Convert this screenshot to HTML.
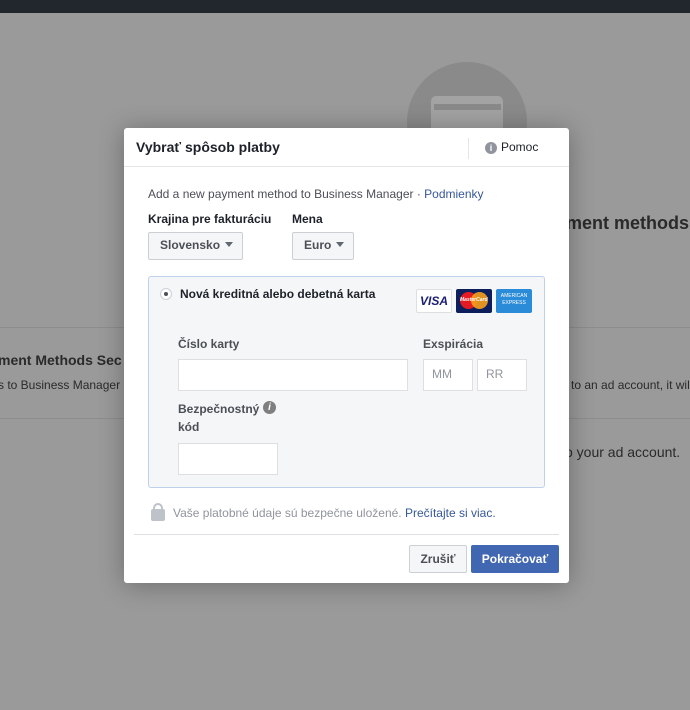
<!DOCTYPE html>
<html><head><meta charset="utf-8"><style>
*{box-sizing:border-box;margin:0;padding:0}
body{width:690px;height:710px;background:#9a9a9a;font-family:"Liberation Sans",Arial,sans-serif;position:relative;overflow:hidden;color:#1d2129}
.a{position:absolute;white-space:nowrap}
.bg{color:#2a2a2a}
.sel{position:absolute;background:#f5f6f7;border:1px solid #ccd0d5;border-radius:2px;font-weight:bold;font-size:12px;color:#4b4f56;line-height:25px;padding-left:11px}
.tri{display:inline-block;width:0;height:0;border-left:4.5px solid transparent;border-right:4.5px solid transparent;border-top:5px solid #606770;margin-left:5px;vertical-align:2px}
.inp{position:absolute;background:#fff;border:1px solid #dddfe2;font-size:12px;color:#90949c;line-height:29px;padding-left:8px}
.lbl{font-weight:bold;font-size:12px;color:#4b4f56}
</style></head><body>
<div class="a" style="left:0;top:0;width:690px;height:13px;background:#22272e"></div>
<div class="a" style="left:407px;top:62px;width:120px;height:120px;border-radius:50%;background:#8a8a8a"></div>
<div class="a" style="left:431px;top:96px;width:72px;height:40px;border-radius:5px;background:#a3a3a3"></div>
<div class="a" style="left:434px;top:104px;width:67px;height:6px;background:#8a8a8a"></div>
<div class="a bg" style="left:566px;top:213px;font-size:18px;font-weight:bold">ment methods</div>
<div class="a" style="left:0;top:327px;width:690px;height:1px;background:#8d8d8d"></div>
<div class="a" style="left:0;top:418px;width:690px;height:1px;background:#8d8d8d"></div>
<div class="a bg" style="left:-2px;top:352px;font-size:14px;font-weight:bold">ment Methods Sec</div>
<div class="a bg" style="left:-2px;top:378px;font-size:12px">s to Business Manager</div>
<div class="a bg" style="left:571px;top:378px;font-size:12px">to an ad account, it wil</div>
<div class="a bg" style="left:565px;top:444px;font-size:14px">o your ad account.</div>

<div class="a" style="left:124px;top:128px;width:445px;height:455px;background:#fff;border-radius:3px;box-shadow:0 2px 26px rgba(0,0,0,.3)"></div>
<div class="a" style="left:124px;top:166px;width:445px;height:1px;background:#e5e5e5"></div>
<div class="a" style="left:136px;top:139px;font-size:14px;font-weight:bold;color:#1d2129">Vybrať spôsob platby</div>
<div class="a" style="left:468px;top:138px;width:1px;height:21px;background:#e5e5e5"></div>
<div class="a" style="left:485px;top:142px;width:12px;height:12px;border-radius:50%;background:#90949c;color:#fff;font-size:9px;font-weight:bold;text-align:center;line-height:12px">i</div>
<div class="a" style="left:501px;top:140px;font-size:12px;color:#1d2129">Pomoc</div>

<div class="a" style="left:148px;top:187px;font-size:12px;color:#4b4f56">Add a new payment method to Business Manager · <span style="color:#365899">Podmienky</span></div>
<div class="a lbl" style="left:148px;top:212px;color:#1d2129">Krajina pre fakturáciu</div>
<div class="a lbl" style="left:292px;top:212px;color:#1d2129">Mena</div>
<div class="sel" style="left:148px;top:232px;width:95px;height:28px">Slovensko<span class="tri"></span></div>
<div class="sel" style="left:292px;top:232px;width:62px;height:28px">Euro<span class="tri"></span></div>

<div class="a" style="left:148px;top:276px;width:397px;height:212px;background:#f5f6f7;border:1px solid #bfd0ec;border-radius:3px"></div>
<div class="a" style="left:160px;top:288px;width:12px;height:12px;border-radius:50%;border:1px solid #ccd0d5;background:#fff"></div>
<div class="a" style="left:164px;top:292px;width:4px;height:4px;border-radius:50%;background:#4b4f56"></div>
<div class="a lbl" style="left:180px;top:287px;color:#1d2129">Nová kreditná alebo debetná karta</div>
<div class="a" style="left:416px;top:289px;width:36px;height:24px;background:#fff;border:1px solid #dddfe2;border-radius:2px;color:#1a1f71;font-weight:bold;font-style:italic;font-size:12px;text-align:center;line-height:22px">VISA</div>
<div class="a" style="left:456px;top:289px;width:36px;height:24px;background:#0a1f5c;border-radius:2px"></div>
<div class="a" style="left:460px;top:292px;width:17px;height:17px;border-radius:50%;background:#e31b23"></div>
<div class="a" style="left:471px;top:292px;width:17px;height:17px;border-radius:50%;background:#f8a01c;opacity:.9"></div>
<div class="a" style="left:460px;top:297px;font-size:5px;color:#fff;font-style:italic;font-weight:bold">MasterCard</div>
<div class="a" style="left:496px;top:289px;width:36px;height:24px;background:#2a8bd8;border-radius:2px;color:#fff;font-size:5px;text-align:center;line-height:7px;padding-top:4px">AMERICAN<br>EXPRESS</div>

<div class="a lbl" style="left:178px;top:337px">Číslo karty</div>
<div class="a lbl" style="left:423px;top:337px">Exspirácia</div>
<div class="inp" style="left:178px;top:359px;width:230px;height:32px"></div>
<div class="inp" style="left:423px;top:359px;width:50px;height:32px">MM</div>
<div class="inp" style="left:477px;top:359px;width:50px;height:32px">RR</div>
<div class="a lbl" style="left:178px;top:402px">Bezpečnostný</div>
<div class="a" style="left:263px;top:401px;width:13px;height:13px;border-radius:50%;background:#7f7f7f;color:#fff;font-size:10px;font-weight:bold;font-style:italic;text-align:center;line-height:13px">i</div>
<div class="a lbl" style="left:178px;top:420px">kód</div>
<div class="inp" style="left:178px;top:443px;width:100px;height:32px"></div>

<div class="a" style="left:153px;top:503px;width:10px;height:10px;border:2px solid #bec2c9;border-radius:5px 5px 0 0;border-bottom:none"></div>
<div class="a" style="left:151px;top:509px;width:14px;height:12px;background:#bec2c9;border-radius:2px"></div>
<div class="a" style="left:173px;top:506px;font-size:12px;color:#90949c">Vaše platobné údaje sú bezpečne uložené. <span style="color:#365899">Prečítajte si viac.</span></div>

<div class="a" style="left:134px;top:534px;width:425px;height:1px;background:#dddfe2"></div>
<div class="a" style="left:409px;top:545px;width:58px;height:28px;background:#f5f6f7;border:1px solid #ccd0d5;border-radius:2px;font-size:12px;font-weight:bold;color:#4b4f56;text-align:center;line-height:26px">Zrušiť</div>
<div class="a" style="left:471px;top:545px;width:88px;height:28px;background:#4267b2;border:1px solid #4267b2;border-radius:2px;font-size:12px;font-weight:bold;color:#fff;text-align:center;line-height:26px">Pokračovať</div>
</body></html>
